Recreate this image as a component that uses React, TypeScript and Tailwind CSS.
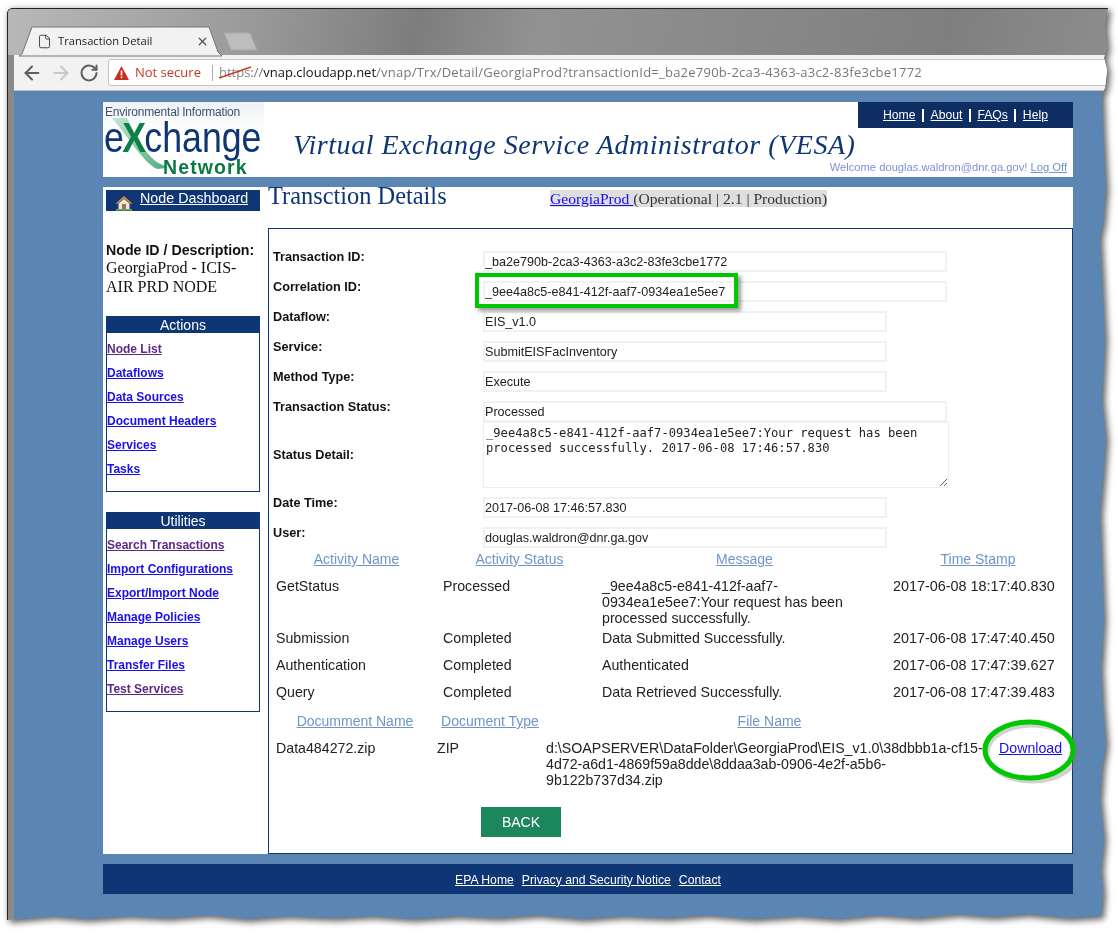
import { ArrowLeft, ArrowRight, RotateCw, File, X } from "lucide-react";

const sans = "font-['Liberation_Sans',Arial,sans-serif]";
const serif = "font-['Liberation_Serif','Times_New_Roman',serif]";

const fields = [
  { label: "Transaction ID:", value: "_ba2e790b-2ca3-4363-a3c2-83fe3cbe1772", wide: true },
  { label: "Correlation ID:", value: "_9ee4a8c5-e841-412f-aaf7-0934ea1e5ee7", wide: true },
  { label: "Dataflow:", value: "EIS_v1.0" },
  { label: "Service:", value: "SubmitEISFacInventory" },
  { label: "Method Type:", value: "Execute" },
  { label: "Transaction Status:", value: "Processed", wide: true },
];

const activity = [
  {
    name: "GetStatus",
    status: "Processed",
    message: "_9ee4a8c5-e841-412f-aaf7-0934ea1e5ee7:Your request has been processed successfully.",
    time: "2017-06-08 18:17:40.830",
  },
  { name: "Submission", status: "Completed", message: "Data Submitted Successfully.", time: "2017-06-08 17:47:40.450" },
  { name: "Authentication", status: "Completed", message: "Authenticated", time: "2017-06-08 17:47:39.627" },
  { name: "Query", status: "Completed", message: "Data Retrieved Successfully.", time: "2017-06-08 17:47:39.483" },
];

const actions = [
  { label: "Node List", visited: true },
  { label: "Dataflows" },
  { label: "Data Sources" },
  { label: "Document Headers" },
  { label: "Services" },
  { label: "Tasks" },
];

const utilities = [
  { label: "Search Transactions", visited: true },
  { label: "Import Configurations" },
  { label: "Export/Import Node" },
  { label: "Manage Policies" },
  { label: "Manage Users" },
  { label: "Transfer Files" },
  { label: "Test Services", visited: true },
];

function Field({ label, value, wide }: { label: string; value: string; wide?: boolean }) {
  return (
    <div className="flex h-[30px] items-start">
      <span className="mt-[-4px] w-[214px] shrink-0 pl-[4px] text-[12.7px] leading-[20px] font-bold text-[#111]">{label}</span>
      <input
        readOnly
        value={value}
        className={`h-[21px] border-2 border-[#f1f1f1] px-[0px] text-[12.6px] text-[#222] outline-none ${wide ? "w-[464px]" : "w-[404px]"}`}
      />
    </div>
  );
}

function SideBox({ title, links, height }: { title: string; links: { label: string; visited?: boolean }[]; height: string }) {
  return (
    <div className={`ml-[3px] w-[154px] border border-[#0f3674] ${height}`}>
      <div className="h-[16px] bg-[#0f3674] text-center text-[14px] leading-[17px] text-white">{title}</div>
      <ul className="mt-[4px] flex flex-col">
        {links.map((link) => (
          <li key={link.label} className="h-[24px] text-[12px] leading-[24px] font-bold">
            <a className={`underline ${link.visited ? "text-[#5b2a86]" : "text-[#1a0dee]"}`}>{link.label}</a>
          </li>
        ))}
      </ul>
    </div>
  );
}

function HeadLink({ children }: { children: string }) {
  return <a className="text-[14px] leading-[21px] text-[#6f94c9] underline">{children}</a>;
}

function NavBar() {
  return <span className="h-[13px] w-[2px] bg-white" />;
}

function Logo() {
  return (
    <div className="relative h-[75px] w-[161px] shrink-0 overflow-hidden bg-gradient-to-b from-[#eef2f5] to-white to-40%">
      <span className="absolute top-[1px] left-[2px] text-[12px] tracking-[-0.2px] whitespace-nowrap text-[#3c5170]">
        Environmental Information
      </span>
      <svg className="absolute inset-0" width="161" height="75" viewBox="0 0 161 75">
        <defs>
          <linearGradient id="swoosh" x1="0" y1="0" x2="1" y2="1">
            <stop offset="0" stopColor="#c3e6d3" />
            <stop offset="1" stopColor="#4fae80" />
          </linearGradient>
        </defs>
        <path d="M9 16 L24 16 C32 32 44 58 60 63 L64 66 L54 67 C40 60 26 36 9 16 Z" fill="url(#swoosh)" />
      </svg>
      <span className="absolute top-[13px] left-[1px] origin-left scale-x-[0.83] text-[43px] leading-[44px] whitespace-nowrap text-[#0f3674]">
        e<span className="-mx-[2px] font-bold text-[#0e7f49]">X</span>change
      </span>
      <span className="absolute top-[55px] left-[60px] text-[19.5px] leading-[20px] font-bold tracking-[1.1px] text-[#0a7a45]">
        Network
      </span>
    </div>
  );
}

function HomeIcon() {
  return (
    <svg width="18" height="16" viewBox="0 0 18 16">
      <path d="M9 1 L17.5 8.5 L16 9 L9 3.5 L2 9 L.5 8.5 Z" fill="#d98a3a" />
      <path d="M3.5 8.5 L9 4 L14.5 8.5 V14 H3.5 Z" fill="#f3e6cf" />
      <rect x="7" y="9" width="4" height="5" fill="#8a7a6a" />
      <rect x="1" y="14" width="16" height="1.6" fill="#6fae4a" />
    </svg>
  );
}

export default function App() {
  return (
    <div className={`h-[934px] w-[1118px] overflow-hidden bg-white pt-[8px] pl-[7px] ${sans}`}>
      <div className="[filter:drop-shadow(3px_3px_3px_rgba(0,0,0,0.55))_drop-shadow(0_0_3px_rgba(0,0,0,0.18))]">
        <div className="flex h-[914px] w-[1104px] flex-col [clip-path:polygon(0_4px,1px_2px,4px_0,1101px_0,1098px_18px,1100px_40px,1097px_50px,1100px_62px,1098px_80px,1095px_86px,1096px_120px,1099px_180px,1096px_215px,1093px_228px,1095px_270px,1098px_330px,1095px_392px,1099px_430px,1096px_470px,1093px_505px,1095px_560px,1097px_610px,1094px_660px,1096px_700px,1099px_735px,1095px_760px,1093px_790px,1097px_830px,1094px_860px,1096px_885px,1094px_908px,1060px_910px,1020px_906px,985px_909px,950px_906px,910px_910px,870px_907px,830px_911px,790px_908px,745px_911px,700px_907px,660px_910px,615px_908px,575px_911px,530px_907px,490px_910px,450px_908px,405px_911px,365px_908px,325px_910px,280px_908px,240px_911px,200px_907px,160px_910px,120px_908px,80px_911px,45px_908px,0_912px)]">
          {/* browser chrome */}
          <div className="relative h-[47px] shrink-0 rounded-tl-[5px] border-t border-l border-[#222] bg-[linear-gradient(100deg,#b8b8b8_0%,#9a9a9a_22%,#7d7d7d_37%,#929292_48%,#8b8b8b_62%,#7f7f7f_85%,#8d8d8d_100%)]">
            <div className="absolute top-[17px] left-[11px] h-[30px] w-[203px]">
              <svg className="absolute inset-0 overflow-visible" width="240" height="30" viewBox="0 0 240 30">
                <path d="M0 30 L3 28 L13 1 H190 L199 26 L203 30 Z" fill="#f2f2f2" stroke="#777" />
                <path d="M205 7 H231 L238 24 H212 Z" fill="#bdbdbd" stroke="#a8a8a8" strokeLinejoin="round" />
              </svg>
              <div className="relative flex h-full items-center pl-[18px]">
                <File size={15} strokeWidth={1.4} className="text-[#333]" />
                <span className="ml-[6px] w-[138px] font-['Open_Sans',sans-serif] text-[11.2px] text-[#222]">Transaction Detail</span>
                <X size={13} strokeWidth={2.4} className="text-[#555]" />
              </div>
            </div>
          </div>
          <div className="flex min-h-0 flex-1">
            <div className="w-[7px] shrink-0 border-l border-[#222] bg-[#8a8a8a]" />
            <div className="flex min-w-0 flex-1 flex-col">
              <div className="flex h-[36px] shrink-0 items-center border-b border-[#bdbdbd] bg-[#f2f2f2] pl-[7px]">
                <ArrowLeft size={22} strokeWidth={2.2} className="text-[#5f5f5f]" />
                <ArrowRight size={22} strokeWidth={2.2} className="ml-[7px] text-[#c8c8c8]" />
                <RotateCw size={20} strokeWidth={2.4} className="ml-[7px] text-[#5f5f5f]" />
                <div className="ml-[9px] flex h-[27px] flex-1 items-center rounded-[3px] border border-[#c4c4c4] bg-white pl-[5px] font-['Open_Sans',sans-serif] text-[13px] whitespace-nowrap">
                  <svg width="15" height="14" viewBox="0 0 15 14">
                    <path d="M7.5 0 L15 14 H0 Z" fill="#c5301f" />
                    <rect x="6.7" y="4.5" width="1.6" height="5" fill="#fff" />
                    <rect x="6.7" y="10.5" width="1.6" height="1.6" fill="#fff" />
                  </svg>
                  <span className="ml-[6px] text-[#c5391f]">Not secure</span>
                  <span className="ml-[11px] h-[16px] w-px bg-[#aaa]" />
                  <span className="relative ml-[6px] text-[#888]">
                    https
                    <svg className="absolute top-[2px] left-0" width="33" height="15" viewBox="0 0 33 15">
                      <path d="M0 13 L32 2" stroke="#c5391f" strokeWidth="1.6" />
                    </svg>
                  </span>
                  <span className="text-[#777]">://</span>
                  <span className="text-[#111]">vnap.cloudapp.net</span>
                  <span className="tracking-[0.24px] text-[#777]">/vnap/Trx/Detail/GeorgiaProd?transactionId=_ba2e790b-2ca3-4363-a3c2-83fe3cbe1772</span>
                </div>
              </div>

              {/* page */}
              <div className="relative min-h-0 flex-1 bg-[#5b86b3] pt-[11px] pl-[89px]">
                <header className="flex h-[75px] w-[970px] bg-white">
                  <Logo />
                  <div className="flex min-w-0 flex-1 flex-col">
                    <div className="flex justify-end">
                      <nav className="flex h-[26px] w-[215px] items-center gap-[6.5px] bg-[#0d2d63] pl-[25px] text-[12.2px] text-white">
                        <a className="underline">Home</a>
                        <NavBar />
                        <a className="underline">About</a>
                        <NavBar />
                        <a className="underline">FAQs</a>
                        <NavBar />
                        <a className="underline">Help</a>
                      </nav>
                    </div>
                    <h1 className={`h-[33px] pl-[29px] text-[28px] leading-[33px] tracking-[0.53px] whitespace-nowrap text-[#0f3674] italic ${serif}`}>
                      Virtual Exchange Service Administrator (VESA)
                    </h1>
                    <p className="pr-[6px] text-right text-[11.2px] leading-[13px] text-[#7f90d8]">
                      Welcome douglas.waldron@dnr.ga.gov! <a className="text-[#6f94c9] underline">Log Off</a>
                    </p>
                  </div>
                </header>

                <div className="mt-[10px] flex h-[667px] w-[970px] bg-white">
                  <aside className="w-[165px] shrink-0 pt-[3px]">
                    <div className="ml-[3px] flex h-[21px] w-[154px] items-start bg-[#0f3674] pl-[9px]">
                      <span className="mt-[5px]"><HomeIcon /></span>
                      <a className="ml-[7px] text-[14.3px] leading-[17px] text-white underline">Node Dashboard</a>
                    </div>
                    <div className="mt-[30px] ml-[3px] text-[14.2px] leading-[18px] text-[#111]">
                      <div className="font-bold">Node ID / Description:</div>
                      <div className={`text-[16px] leading-[18.5px] ${serif}`}>GeorgiaProd - ICIS-<br />AIR PRD NODE</div>
                    </div>
                    <div className="mt-[20px]">
                      <SideBox title="Actions" links={actions} height="h-[176px]" />
                    </div>
                    <div className="mt-[20px]">
                      <SideBox title="Utilities" links={utilities} height="h-[200px]" />
                    </div>
                  </aside>

                  <div className="flex min-w-0 flex-1 flex-col">
                    <div className="flex h-[41px] shrink-0 items-start">
                      <h2 className={`w-[282px] shrink-0 text-[24.4px] leading-[18px] text-[#0f3674] ${serif}`}>Transction Details</h2>
                      <p className={`mt-[3px] bg-[#dedede] text-[15.6px] leading-[17px] whitespace-nowrap text-[#333] ${serif}`}>
                        <a className="text-[#1a0dee] underline">GeorgiaProd </a>(Operational | 2.1 | Production)
                      </p>
                    </div>

                    <section className="relative min-h-0 flex-1 border border-[#0f3674] pt-[22px] text-[14.2px] text-[#222]">
                      {fields.map((field) => (
                        <Field key={field.label} {...field} />
                      ))}
                      <div className="-mt-[9px] flex h-[75px] items-start">
                        <span className="mt-[23px] w-[214px] shrink-0 pl-[4px] text-[12.7px] leading-[20px] font-bold text-[#111]">Status Detail:</span>
                        <textarea
                          readOnly
                          value="_9ee4a8c5-e841-412f-aaf7-0934ea1e5ee7:Your request has been processed successfully. 2017-06-08 17:46:57.830"
                          className="h-[66px] w-[466px] border border-[#eee] px-[2px] py-[3px] font-['DejaVu_Sans_Mono',monospace] text-[12.15px] leading-[15px] text-[#222] outline-none"
                        />
                      </div>
                      <Field label="Date Time:" value="2017-06-08 17:46:57.830" />
                      <Field label="User:" value="douglas.waldron@dnr.ga.gov" />

                      <div className="mt-[-8px] ml-[4px] grid grid-cols-[167px_159px_291px_176px]">
                        <div className="h-[29px] text-center"><HeadLink>Activity Name</HeadLink></div>
                        <div className="text-center"><HeadLink>Activity Status</HeadLink></div>
                        <div className="text-center"><HeadLink>Message</HeadLink></div>
                        <div className="text-center"><HeadLink>Time Stamp</HeadLink></div>
                        {activity.map((row) => (
                          <div key={row.name} className="contents">
                            <div className="pb-[11px] pl-[3px] leading-[16px]">{row.name}</div>
                            <div className="pl-[3px] leading-[16px]">{row.status}</div>
                            <div className="pr-[30px] pb-[4px] pl-[3px] leading-[16px] break-words">{row.message}</div>
                            <div className="pl-[3px] text-[14.4px] leading-[16px]">{row.time}</div>
                          </div>
                        ))}
                      </div>

                      <div className="ml-[4px] grid grid-cols-[164px_106px_453px_70px]">
                        <div className="h-[29px] text-center"><HeadLink>Documment Name</HeadLink></div>
                        <div className="text-center"><HeadLink>Document Type</HeadLink></div>
                        <div className="text-center"><HeadLink>File Name</HeadLink></div>
                        <div />
                        <div className="pl-[3px] leading-[16px]">Data484272.zip</div>
                        <div className="leading-[16px]">ZIP</div>
                        <div className="pl-[3px] leading-[16px] break-words">
                          d:\SOAPSERVER\DataFolder\GeorgiaProd\EIS_v1.0\38dbbb1a-cf15-4d72-a6d1-4869f59a8dde\8ddaa3ab-0906-4e2f-a5b6-9b122b737d34.zip
                        </div>
                        <div className="pl-[3px] leading-[16px]"><a className="text-[#1a0dee] underline">Download</a></div>
                      </div>

                      <button className="mt-[19px] ml-[212px] block h-[30px] w-[80px] bg-[#1c865c] text-[14px] text-white">BACK</button>

                      {/* annotations */}
                      <div className="absolute top-[44px] left-[206px] h-[35px] w-[263px] border-[4px] border-[#00c800] shadow-[3px_3px_4px_rgba(0,0,0,0.4)]" />
                      <svg className="absolute top-[490px] left-[713px] overflow-visible" width="94" height="64" viewBox="0 0 94 64">
                        <ellipse cx="48" cy="32" rx="45" ry="28" fill="none" stroke="#7a7a7a" strokeWidth="5" opacity="0.35" transform="translate(2 2)" />
                        <ellipse cx="47" cy="31" rx="44" ry="28" fill="none" stroke="#00c800" strokeWidth="5" />
                      </svg>
                    </section>
                  </div>
                </div>

                <footer className="mt-[10px] flex h-[30px] w-[970px] items-center justify-center gap-[8px] bg-[#0f3674] pt-[2px] text-[12.2px] text-white">
                  <a className="underline">EPA Home</a>
                  <a className="underline">Privacy and Security Notice</a>
                  <a className="underline">Contact</a>
                </footer>
              </div>
            </div>
          </div>
        </div>
      </div>
    </div>
  );
}
